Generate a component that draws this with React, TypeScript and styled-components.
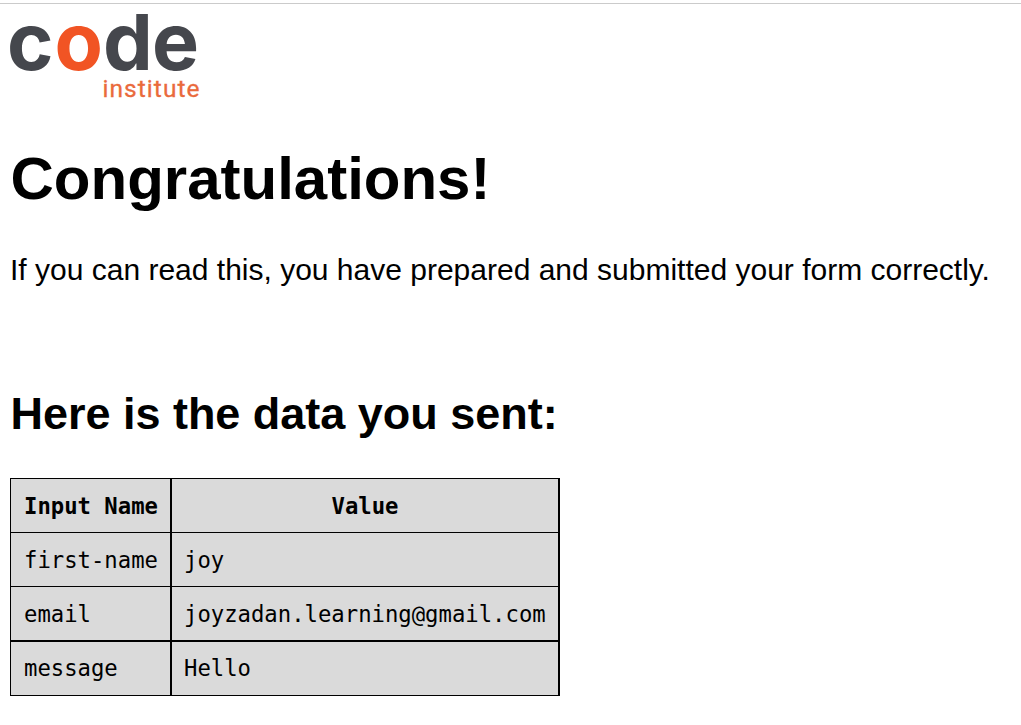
import React from "react";
import styled, { createGlobalStyle } from "styled-components";

const GlobalStyle = createGlobalStyle`
  * { box-sizing: border-box; }
  html, body { margin: 0; background: #fff; }
  body { font-family: "Liberation Sans", Arial, sans-serif; color: #000; overflow: hidden; }
`;

const Page = styled.main`
  margin-top: 3px;
  border-top: 1px solid #cbcbcb;
  padding: 10px 10px 0;
`;

const Logo = styled.svg`
  display: block;
  width: 192px;
  height: 88px;
  overflow: hidden;
`;

const Wordmark = styled.text`
  font-family: Inter, sans-serif;
  font-weight: 700;
  font-size: 79px;
  fill: #45474d;
`;

const Accent = styled.tspan`
  fill: #f15424;
`;

const Subtitle = styled.text`
  font-family: Roboto, sans-serif;
  font-size: 24.5px;
  fill: #ea6a3c;
  stroke: #ea6a3c;
  stroke-width: 0.3px;
`;

const Title = styled.h1`
  margin: 42px 0 0;
  padding-left: 0.5px;
  font-size: 60px;
  line-height: 70px;
  white-space: nowrap;
`;

const Message = styled.p`
  margin: 38px 0 0;
  font-size: 30px;
  line-height: 36px;
  white-space: nowrap;
`;

const Subheading = styled.h2`
  margin: 100px 0 0;
  padding-left: 0.5px;
  font-size: 45px;
  line-height: 52px;
  letter-spacing: -0.02px;
  white-space: nowrap;
`;

const DataTable = styled.table`
  width: 550px;
  margin-top: 38px;
  table-layout: fixed;
  border-collapse: separate;
  border-spacing: 0;
  border: solid #000;
  border-width: 0 2px 1px 0;
  background: #dadada;
  font-family: "DejaVu Sans Mono", monospace;
  font-size: 22.25px;
  line-height: 26px;
`;

const Row = styled.tr<{ $last?: boolean }>`
  height: ${(p) => (p.$last ? 55 : 54)}px;

  > * {
    padding: 0 0 ${(p) => (p.$last ? 2 : 0)}px 13px;
    border: solid #000;
    border-width: ${(p) => (p.$last ? 2 : 1)}px 0 0 1px;
    text-align: left;
    vertical-align: middle;
    white-space: nowrap;
  }

  > :last-child {
    padding-left: 12px;
    border-left-width: 2px;
  }
`;

const NameHeader = styled.th`
  width: 160px;
`;

const ValueHeader = styled.th`
  && {
    padding: 0;
    text-align: center;
  }
`;

const Cell = styled.td``;

const fields = [
  { name: "first-name", value: "joy" },
  { name: "email", value: "joyzadan.learning@gmail.com" },
  { name: "message", value: "Hello" },
];

export default function App() {
  return (
    <>
      <GlobalStyle />
      <Page>
        <Logo viewBox="0 0 192 88" role="img" aria-label="code institute">
          <Wordmark y="56" x="-3 44.5 93 142">
            c<Accent>o</Accent>de
          </Wordmark>
          <Subtitle x="92.5" y="83" textLength="97">
            institute
          </Subtitle>
        </Logo>
        <Title>Congratulations!</Title>
        <Message>If you can read this, you have prepared and submitted your form correctly.</Message>
        <Subheading>Here is the data you sent:</Subheading>
        <DataTable>
          <thead>
            <Row>
              <NameHeader>Input Name</NameHeader>
              <ValueHeader>Value</ValueHeader>
            </Row>
          </thead>
          <tbody>
            {fields.map((field, i) => (
              <Row key={field.name} $last={i === fields.length - 1}>
                <Cell>{field.name}</Cell>
                <Cell>{field.value}</Cell>
              </Row>
            ))}
          </tbody>
        </DataTable>
      </Page>
    </>
  );
}
